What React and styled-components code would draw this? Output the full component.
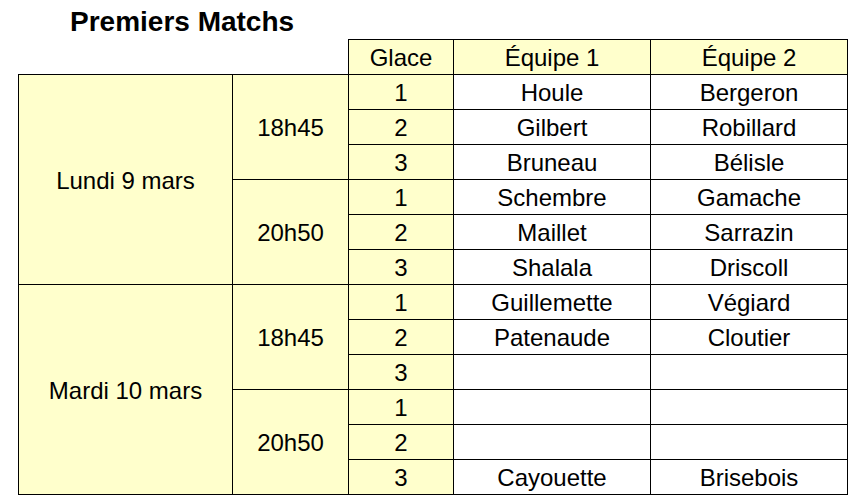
import styled, { createGlobalStyle } from "styled-components";

const GlobalStyle = createGlobalStyle`
  html, body {
    margin: 0;
    padding: 0;
    background: #ffffff;
  }
  body {
    font-family: "Liberation Sans", Arial, sans-serif;
    color: #000000;
  }
`;

const schedule = [
  {
    day: "Lundi 9 mars",
    slots: [
      { time: "18h45", games: [["Houle", "Bergeron"], ["Gilbert", "Robillard"], ["Bruneau", "Bélisle"]] },
      { time: "20h50", games: [["Schembre", "Gamache"], ["Maillet", "Sarrazin"], ["Shalala", "Driscoll"]] },
    ],
  },
  {
    day: "Mardi 10 mars",
    slots: [
      { time: "18h45", games: [["Guillemette", "Végiard"], ["Patenaude", "Cloutier"], ["", ""]] },
      { time: "20h50", games: [["", ""], ["", ""], ["Cayouette", "Brisebois"]] },
    ],
  },
];

export default function App() {
  return (
    <Page>
      <GlobalStyle />
      <Title>Premiers Matchs</Title>
      <Table>
        <colgroup>
          <col style={{ width: 214 }} />
          <col style={{ width: 116 }} />
          <col style={{ width: 105 }} />
          <col style={{ width: 197 }} />
          <col style={{ width: 197 }} />
        </colgroup>
        <thead>
          <Row>
            <Blank />
            <Blank />
            <Head>Glace</Head>
            <Head>Équipe 1</Head>
            <Head>Équipe 2</Head>
          </Row>
        </thead>
        <tbody>
          {schedule.map((d) =>
            d.slots.map((s, si) =>
              s.games.map((g, gi) => (
                <Row key={d.day + s.time + gi}>
                  {si === 0 && gi === 0 && <Label rowSpan={6}>{d.day}</Label>}
                  {gi === 0 && <Label rowSpan={3}>{s.time}</Label>}
                  <Label>{gi + 1}</Label>
                  <Team>{g[0]}</Team>
                  <Team>{g[1]}</Team>
                </Row>
              ))
            )
          )}
        </tbody>
      </Table>
    </Page>
  );
}

const Page = styled.div`
  padding: 6px 0 0 18px;
`;

const Title = styled.h1`
  margin: 0 0 1px 52px;
  height: 32px;
  font-size: 28px;
  font-weight: 700;
  line-height: 32px;
`;

const Table = styled.table`
  border-collapse: collapse;
  table-layout: fixed;
  width: 829px;
  font-size: 24px;
`;

const Row = styled.tr`
  height: 35px;
`;

const Cell = styled.td`
  border: 1px solid #000000;
  padding: 1px 0 0;
  text-align: center;
  vertical-align: middle;
  line-height: 27px;
`;

const Blank = styled.th`
  border: none;
  padding: 0;
`;

const Head = styled(Cell).attrs({ as: "th" })`
  background: #ffffcc;
  font-weight: 400;
`;

const Label = styled(Cell)`
  background: #ffffcc;
`;

const Team = styled(Cell)`
  background: #ffffff;
`;
